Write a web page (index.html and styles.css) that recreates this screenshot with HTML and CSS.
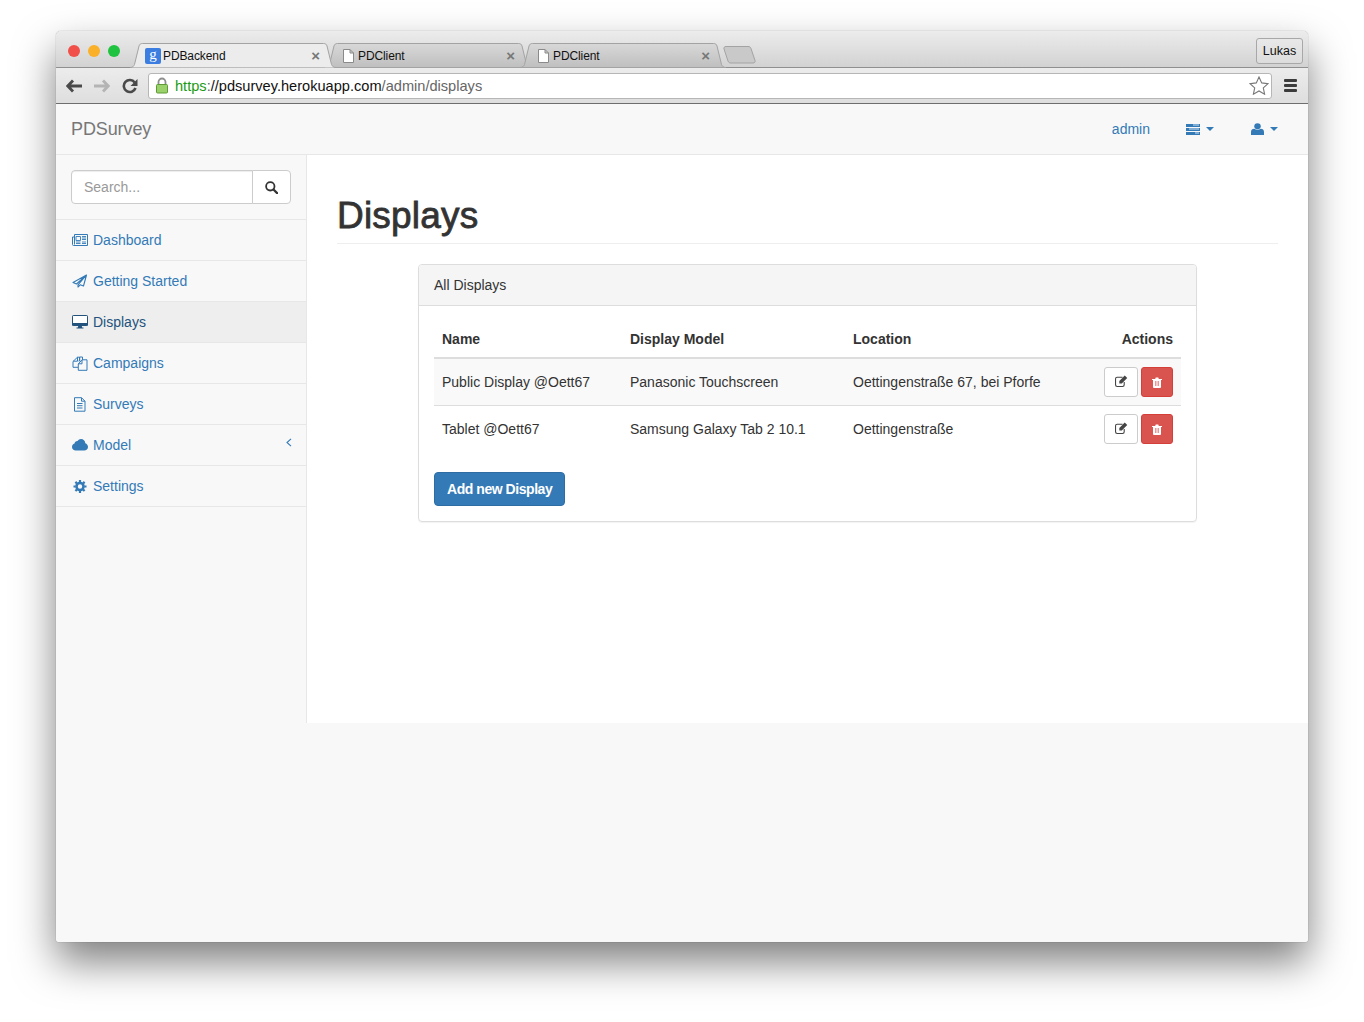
FILE: index.html
```html
<!DOCTYPE html>
<html lang="en">

<head>
  <meta charset="UTF-8" />
  <title>PDBackend</title>
  <link rel="stylesheet" href="styles.css">
</head>

<body>
  <div class="window">
    <div class="tabstrip">
      <div class="lights">
        <span class="light red"></span>
        <span class="light yellow"></span>
        <span class="light green"></span>
      </div>
      <div class="tabs">
        <div class="tab active">
          <svg class="tab-shape" width="206" height="25" viewBox="0 0 206 25"><path d="M0 24.500c2.500 0 3.500-1 4.500-3L9 3c.6-1.700 1.500-2.500 3.500-2.500h181c2 0 3 .8 3.500 2.500l4.500 18.500c1 2 2 3 4.500 3" fill="#ececec" stroke="#a3a3a3"/></svg>
          <span class="favicon">g</span>
          <span class="tab-title">PDBackend</span>
          <span class="tab-close">&times;</span>
        </div>
        <div class="tab">
          <svg class="tab-shape" width="206" height="25" viewBox="0 0 206 25"><path d="M0 24.500c2.500 0 3.500-1 4.500-3L9 3c.6-1.700 1.500-2.500 3.500-2.500h181c2 0 3 .8 3.500 2.500l4.500 18.500c1 2 2 3 4.500 3z" fill="url(#tabfill)" stroke="#a3a3a3"/><defs><linearGradient id="tabfill" x1="0" y1="0" x2="0" y2="1"><stop offset="0" stop-color="#d8d8d8"/><stop offset="1" stop-color="#bfbfbf"/></linearGradient></defs></svg>
          <svg class="page-icon" width="11" height="14" viewBox="0 0 11 14"><path d="M.5.500h6.500l3.500 3.500v9.500h-10zM7 .5v3.500h3.500" fill="#fff" stroke="#8a8a8a"/></svg>
          <span class="tab-title">PDClient</span>
          <span class="tab-close">&times;</span>
        </div>
        <div class="tab">
          <svg class="tab-shape" width="206" height="25" viewBox="0 0 206 25"><path d="M0 24.500c2.500 0 3.500-1 4.500-3L9 3c.6-1.700 1.500-2.500 3.500-2.500h181c2 0 3 .8 3.500 2.500l4.500 18.500c1 2 2 3 4.500 3z" fill="url(#tabfill)" stroke="#a3a3a3"/></svg>
          <svg class="page-icon" width="11" height="14" viewBox="0 0 11 14"><path d="M.5.500h6.500l3.500 3.500v9.500h-10zM7 .5v3.500h3.500" fill="#fff" stroke="#8a8a8a"/></svg>
          <span class="tab-title">PDClient</span>
          <span class="tab-close">&times;</span>
        </div>
        <svg class="new-tab" width="33" height="18" viewBox="0 0 33 18"><path d="M1 3c-.5-1.500.5-2.500 2-2.500h22c1.500 0 2.500.5 3 2l4 12c.5 1.500-.5 2.500-2 2.500H8c-1.500 0-2.500-.5-3-2z" fill="#c9c9c9" stroke="#a3a3a3"/></svg>
      </div>
      <div class="profile">Lukas</div>
    </div>

    <div class="toolbar">
      <svg class="tool-icon" width="16" height="14" viewBox="0 0 16 14"><path d="M7 1.500 1.800 7 7 12.500M2 7h14" fill="none" stroke="#4a4a4a" stroke-width="2.800"/></svg>
      <svg class="tool-icon" width="16" height="14" viewBox="0 0 16 14"><path d="M9 1.500 14.200 7 9 12.500M14 7H0" fill="none" stroke="#b4b4b4" stroke-width="2.800"/></svg>
      <svg class="tool-icon" width="16" height="16" viewBox="0 0 16 16"><path d="M13.500 10a6 6 0 1 1-.8-5.500" fill="none" stroke="#4a4a4a" stroke-width="2.600"/><path d="M15.500 1v7h-7z" fill="#4a4a4a"/></svg>
      <div class="omnibox">
        <svg class="lock" width="14" height="17" viewBox="0 0 14 17"><path d="M3.500 8V5a3.500 3.500 0 0 1 7 0v3" fill="none" stroke="#8f8f8f" stroke-width="1.800"/><rect x="1.500" y="7.500" width="11" height="8.500" rx="1" fill="#9ad16b" stroke="#5e9a35"/></svg>
        <span class="url"><span class="url-https">https</span><span class="url-path">:</span>//pdsurvey.herokuapp.com<span class="url-path">/admin/displays</span></span>
        <svg class="star" width="20" height="19" viewBox="0 0 20 19"><path d="m10 1 2.700 5.900 6.300.7-4.700 4.300 1.300 6.300L10 15l-5.600 3.200 1.300-6.300L1 7.600l6.300-.7z" fill="#fff" stroke="#777" stroke-width="1.100"/></svg>
      </div>
      <div class="menu-icon"><span></span><span></span><span></span></div>
    </div>

    <div class="page">
      <nav class="navbar">
        <a class="brand" href="#">PDSurvey</a>
        <ul class="nav-right">
          <li class="nav-user"><a href="#">admin</a></li>
          <li>
            <a href="#">
              <svg width="14" height="11" viewBox="0 0 14 11"><path d="M0 0h14v3H0zM0 4h14v3H0zM0 8h14v3H0z" fill="#337ab7"/><path d="M7 1h6M3 5h10M9 9h4" stroke="#fff" stroke-width=".8"/></svg>
              <span class="caret"></span>
            </a>
          </li>
          <li>
            <a href="#">
              <svg width="13" height="12" viewBox="0 0 12 12" preserveAspectRatio="none"><circle cx="6" cy="3.200" r="3" fill="#337ab7"/><path d="M0 12V9c0-2 1.300-3.200 3-3.200 1.800 1.400 4.200 1.400 6 0 1.700 0 3 1.200 3 3.200v3z" fill="#337ab7"/></svg>
              <span class="caret"></span>
            </a>
          </li>
        </ul>
      </nav>

      <div class="content">
        <aside class="sidebar">
          <div class="search">
            <input type="text" placeholder="Search..." />
            <button type="button" aria-label="Search">
              <svg width="13" height="13" viewBox="0 0 13 13"><circle cx="5.300" cy="5.300" r="4.200" fill="none" stroke="#333" stroke-width="1.800"/><path d="m8.500 8.500 3.600 3.600" stroke="#333" stroke-width="2.200" stroke-linecap="round"/></svg>
            </button>
          </div>
          <ul class="side-menu">
            <li><a href="#">
              <svg width="16" height="12" viewBox="0 0 16 12"><path d="M2.500.5h13v11H1.500a1 1 0 0 1-1-1V3h2zM2.500 3v7.500" fill="none" stroke="#337ab7"/><path d="M4 2.500h4.500v4H4zM4 8h4.500M4 9.500h4.500M10 2.500h4M10 4h4M10 5.500h4M10 8h4M10 9.500h4" fill="none" stroke="#337ab7" stroke-width=".9"/></svg>
              Dashboard</a></li>
            <li><a href="#">
              <svg width="16" height="14" viewBox="0 0 16 14"><path d="M14.500 1 1 8.500l3.500 1.500L14.500 1 6 10.800V13l2.200-2.200 3.300 1.200z" fill="none" stroke="#337ab7" stroke-width="1.100" stroke-linejoin="round"/></svg>
              Getting Started</a></li>
            <li class="active"><a href="#">
              <svg width="16" height="14" viewBox="0 0 16 14"><path d="M1.200.5h13.600c.4 0 .7.300.7.700v8.600c0 .4-.3.700-.7.700H1.200a.7.700 0 0 1-.7-.7V1.200c0-.4.300-.7.700-.7z" fill="#fff" stroke="#23527c" stroke-width="1"/><path d="M0 8h16v2.500H0zM6.300 10.500h3.400l.4 2h1.400v1H4.500v-1h1.400z" fill="#23527c"/></svg>
              Displays</a></li>
            <li><a href="#">
              <svg width="16" height="15" viewBox="0 0 16 15"><path d="M7.500 4.500V1.200h-2L1 5.500v5.800h5M5.500 1.200v4H1.200M10.500 1h-2.800v4H6.500M10 3.800h5v10.500H6.300V8l3.700-4.200zM10 3.800v4H6.300M10.500 1v2.800" fill="none" stroke="#337ab7" stroke-width="1"/></svg>
              Campaigns</a></li>
            <li><a href="#">
              <svg width="16" height="15" viewBox="0 0 16 15"><path d="M2.500.7h7l3.500 3.500v10H2.500zM9.500.7v3.500H13M5 6.500h5.500M5 8.700h5.500M5 11h5.500" fill="none" stroke="#337ab7" stroke-width="1"/></svg>
              Surveys</a></li>
            <li><a href="#">
              <svg width="16" height="12" viewBox="0 0 16 12"><path d="M3.800 11.500C1.700 11.500 0 10 0 8c0-1.600 1-2.900 2.500-3.400C2.700 2.900 4 1.900 5.500 2 6.300.8 7.600 0 9 0c2.300 0 4.200 1.700 4.300 4.200 1.600.6 2.700 2 2.700 3.700 0 2-1.700 3.600-3.800 3.600z" fill="#337ab7"/></svg>
              Model
              <svg class="chevron" width="6" height="9" viewBox="0 0 6 9"><path d="M5 .8 1 4.500 5 8.200" fill="none" stroke="#337ab7" stroke-width="1.100"/></svg></a></li>
            <li><a href="#">
              <svg width="16" height="13" viewBox="-1.500 0 16 13"><circle cx="6.500" cy="6.500" r="3.500" fill="none" stroke="#337ab7" stroke-width="2.600"/><path d="M6.500 0v13M0 6.500h13M1.900 1.900l9.200 9.200M11.100 1.900l-9.200 9.200" stroke="#337ab7" stroke-width="2.200" stroke-dasharray="2.200 8.600"/></svg>
              Settings</a></li>
          </ul>
        </aside>

        <main class="main">
          <h1 class="page-title">Displays</h1>
          <section class="panel">
            <div class="panel-heading">All Displays</div>
            <div class="panel-body">
              <table class="displays">
                <thead>
                  <tr>
                    <th class="col-name">Name</th>
                    <th class="col-model">Display Model</th>
                    <th>Location</th>
                    <th class="col-actions">Actions</th>
                  </tr>
                </thead>
                <tbody>
                  <tr class="striped">
                    <td>Public Display @Oett67</td>
                    <td>Panasonic Touchscreen</td>
                    <td>Oettingenstraße 67, bei Pforfe</td>
                    <td class="col-actions">
                      <div class="actions">
                        <button class="btn-icon" type="button" aria-label="Edit"><svg class="edit-icon" width="13" height="12" viewBox="0 0 12 11"><path d="M8.500 6.500V9a1.500 1.500 0 0 1-1.500 1.500H2A1.500 1.500 0 0 1 .5 9V3.500A1.500 1.500 0 0 1 2 2h5" fill="none" stroke="#444" stroke-width="1"/><path d="m4 5.500 5-5 2.300 2.300-5 5H4z" fill="#444"/></svg></button>
                        <button class="btn-icon danger" type="button" aria-label="Delete"><svg width="10" height="11" viewBox="0 0 10 11"><path d="M0 2h10v1H9v7a1 1 0 0 1-1 1H2a1 1 0 0 1-1-1V3H0zM3.200 2l.5-1.500h2.600L6.800 2z" fill="#fff"/><path d="M3.500 4v5M5 4v5M6.500 4v5" stroke="#d9534f" stroke-width=".6"/></svg></button>
                      </div>
                    </td>
                  </tr>
                  <tr>
                    <td>Tablet @Oett67</td>
                    <td>Samsung Galaxy Tab 2 10.1</td>
                    <td>Oettingenstraße</td>
                    <td class="col-actions">
                      <div class="actions">
                        <button class="btn-icon" type="button" aria-label="Edit"><svg class="edit-icon" width="13" height="12" viewBox="0 0 12 11"><path d="M8.500 6.500V9a1.500 1.500 0 0 1-1.500 1.500H2A1.500 1.500 0 0 1 .5 9V3.500A1.500 1.500 0 0 1 2 2h5" fill="none" stroke="#444" stroke-width="1"/><path d="m4 5.500 5-5 2.300 2.300-5 5H4z" fill="#444"/></svg></button>
                        <button class="btn-icon danger" type="button" aria-label="Delete"><svg width="10" height="11" viewBox="0 0 10 11"><path d="M0 2h10v1H9v7a1 1 0 0 1-1 1H2a1 1 0 0 1-1-1V3H0zM3.200 2l.5-1.500h2.600L6.800 2z" fill="#fff"/><path d="M3.500 4v5M5 4v5M6.500 4v5" stroke="#d9534f" stroke-width=".6"/></svg></button>
                      </div>
                    </td>
                  </tr>
                </tbody>
              </table>
              <a class="btn-primary" href="#">Add new Display</a>
            </div>
          </section>
        </main>
      </div>
    </div>
  </div>
</body>

</html>
```

FILE: styles.css
```css
html,
body {
  margin: 0;
  height: 100%;
}

body {
  background-color: #fff;
  font-family: 'Liberation Sans', Arial, sans-serif;
  font-size: 14px;
  line-height: 20px;
  color: #333;
  overflow: hidden;
}

a {
  color: #337ab7;
  text-decoration: none;
}

ul {
  list-style: none;
  margin: 0;
  padding: 0;
}

/* browser chrome */
.window {
  width: 1252px;
  height: 911px;
  margin: 31px 0 0 56px;
  border-radius: 5px 5px 3px 3px;
  background-color: #f8f8f8;
  box-shadow: 0 20px 40px rgba(0, 0, 0, 0.5), 0 0 1px rgba(0, 0, 0, 0.5);
  display: flex;
  flex-direction: column;
}

.tabstrip {
  height: 37px;
  box-sizing: border-box;
  border-bottom: 1px solid #8f8f8f;
  border-radius: 5px 5px 0 0;
  background: linear-gradient(#ececec, #d2d2d2);
  display: flex;
  align-items: flex-end;
}

.lights {
  display: flex;
  gap: 8px;
  padding: 0 0 10px 12px;
  width: 65px;
  box-sizing: border-box;
  align-self: flex-start;
  margin-top: 14px;
}

.light {
  width: 12px;
  height: 12px;
  border-radius: 50%;
  flex: none;
}

.red {
  background-color: #f1504a;
}

.yellow {
  background-color: #fbb02a;
}

.green {
  background-color: #20c33f;
}

.tabs {
  display: flex;
  align-items: flex-end;
  margin-left: 12px;
  flex: 1;
  margin-bottom: -1px;
}

.tab {
  position: relative;
  width: 195px;
  height: 25px;
  font-size: 12px;
  color: #111;
  display: flex;
  align-items: center;
  padding-left: 12px;
  box-sizing: border-box;
}

.tab-shape {
  position: absolute;
  left: -3px;
  top: 0;
}

.tab.active {
  z-index: 2;
}

.favicon,
.page-icon,
.tab-title,
.tab-close {
  position: relative;
}

.favicon {
  width: 16px;
  height: 16px;
  border-radius: 2px;
  background-color: #3b7de0;
  color: #fff;
  font-family: 'Liberation Serif', serif;
  font-size: 15px;
  line-height: 12px;
  text-align: center;
  margin-right: 2px;
}

.page-icon {
  margin: 0 4px 0 3px;
}

.tab-title {
  flex: 1;
  line-height: 16px;
  letter-spacing: -0.1px;
  padding-top: 1px;
}

.tab-close {
  color: #777;
  font-size: 15px;
  font-weight: bold;
  margin-right: 8px;
  line-height: 16px;
}

.new-tab {
  margin: 0 0 4px 5px;
}

.profile {
  align-self: flex-start;
  margin: 7px 5px 0 0;
  width: 47px;
  height: 26px;
  box-sizing: border-box;
  border: 1px solid #a8a8a8;
  border-radius: 3px;
  background: linear-gradient(#e8e8e8, #dcdcdc);
  font-size: 12.5px;
  line-height: 25px;
  text-align: center;
  color: #111;
}

.toolbar {
  height: 36px;
  box-sizing: border-box;
  border-bottom: 1px solid #6e6e6e;
  background: linear-gradient(#ececec, #dedede);
  display: flex;
  align-items: center;
  padding: 0 11px 0 10px;
  gap: 12px;
}

.tool-icon {
  flex: none;
}

.omnibox {
  flex: 1;
  height: 26px;
  margin-left: -2px;
  box-sizing: border-box;
  border: 1px solid #b6b6b6;
  border-radius: 3px;
  background-color: #fff;
  display: flex;
  align-items: center;
  padding: 0 2px 0 6px;
  gap: 6px;
}

.lock {
  flex: none;
}

.url {
  flex: 1;
  font-size: 14.6px;
  color: #111;
}

.url-https {
  color: #1a9b14;
}

.url-path {
  color: #666;
}

.menu-icon {
  display: flex;
  flex-direction: column;
  gap: 2px;
  width: 13px;
}

.menu-icon span {
  height: 3px;
  border-radius: 1px;
  background-color: #3c3c3c;
}

/* page */
.page {
  flex: 1;
  display: flex;
  flex-direction: column;
  background-color: #f8f8f8;
  border-radius: 0 0 3px 3px;
}

.navbar {
  height: 51px;
  box-sizing: border-box;
  border-bottom: 1px solid #e7e7e7;
  display: flex;
  align-items: center;
  justify-content: space-between;
  padding: 0 30px 0 15px;
}

.brand {
  font-size: 18px;
  letter-spacing: -0.1px;
  color: #777;
}

.nav-right {
  display: flex;
  align-items: center;
  gap: 37px;
}

.nav-user {
  margin-right: -1px;
}

.nav-right a {
  display: flex;
  align-items: center;
  gap: 6px;
}

.caret {
  width: 0;
  height: 0;
  border-top: 4px solid #337ab7;
  border-left: 4px solid transparent;
  border-right: 4px solid transparent;
}

.content {
  height: 568px;
  display: flex;
}

.sidebar {
  width: 251px;
  box-sizing: border-box;
  border-right: 1px solid #e7e7e7;
}

.search {
  display: flex;
  margin: 15px;
  height: 34px;
}

.search input {
  flex: 1;
  min-width: 0;
  box-sizing: border-box;
  height: 34px;
  padding: 6px 12px;
  border: 1px solid #ccc;
  border-radius: 4px 0 0 4px;
  font-family: inherit;
  font-size: 14px;
  color: #555;
  box-shadow: inset 0 1px 1px rgba(0, 0, 0, 0.075);
}

.search input::placeholder {
  color: #999;
}

.search button {
  width: 39px;
  height: 34px;
  margin-left: -1px;
  padding: 0;
  border: 1px solid #ccc;
  border-radius: 0 4px 4px 0;
  background-color: #fff;
  display: flex;
  align-items: center;
  justify-content: center;
}

.side-menu {
  border-top: 1px solid #e7e7e7;
}

.side-menu li {
  border-bottom: 1px solid #e7e7e7;
}

.side-menu a {
  height: 40px;
  box-sizing: border-box;
  padding: 0 14px 0 16px;
  display: flex;
  align-items: center;
  gap: 5px;
}

.side-menu li.active a {
  background-color: #eee;
  color: #23527c;
}

.chevron {
  margin: -5px 0 0 auto;
}

.main {
  flex: 1;
  background-color: #fff;
  padding: 0 30px;
}

.page-title {
  margin: 41px 0 20px;
  padding-bottom: 7px;
  border-bottom: 1px solid #eee;
  font-size: 37px;
  line-height: 40px;
  font-weight: 400;
  letter-spacing: 0.2px;
  color: #333;
  -webkit-text-stroke: 0.8px #333;
}

.panel {
  width: 779px;
  margin: 0 auto;
  box-sizing: border-box;
  border: 1px solid #ddd;
  border-radius: 4px;
  box-shadow: 0 1px 1px rgba(0, 0, 0, 0.05);
}

.panel-heading {
  height: 41px;
  box-sizing: border-box;
  padding: 10px 15px;
  background-color: #f5f5f5;
  border-bottom: 1px solid #ddd;
  border-radius: 3px 3px 0 0;
}

.panel-body {
  padding: 15px;
}

.displays {
  width: 747px;
  border-collapse: collapse;
  margin-bottom: 20px;
}

.displays th {
  padding: 8px;
  text-align: left;
  font-weight: bold;
  height: 20px;
  border-bottom: 2px solid #ddd;
}

.displays td {
  padding: 8px;
  height: 30px;
  border-bottom: 1px solid #ddd;
}

.displays tbody tr:last-child td {
  border-bottom: none;
}

.displays tr.striped {
  background-color: #f9f9f9;
}

.col-name {
  width: 172px;
}

.col-model {
  width: 207px;
}

.displays .col-actions {
  width: 69px;
  text-align: right;
}

.actions {
  display: flex;
  justify-content: flex-end;
  gap: 3px;
}

.btn-icon {
  width: 34px;
  height: 30px;
  padding: 0;
  border: 1px solid #ccc;
  border-radius: 3px;
  background-color: #fff;
  display: flex;
  align-items: center;
  justify-content: center;
}

.edit-icon {
  margin-top: -3px;
}

.btn-icon.danger {
  width: 32px;
  border-color: #d43f3a;
  background-color: #d9534f;
}

.btn-primary {
  display: inline-block;
  height: 34px;
  box-sizing: border-box;
  padding: 6px 12px;
  border: 1px solid #2e6da4;
  border-radius: 4px;
  background-color: #337ab7;
  color: #fff;
  font-weight: bold;
  letter-spacing: -0.45px;
}
```
